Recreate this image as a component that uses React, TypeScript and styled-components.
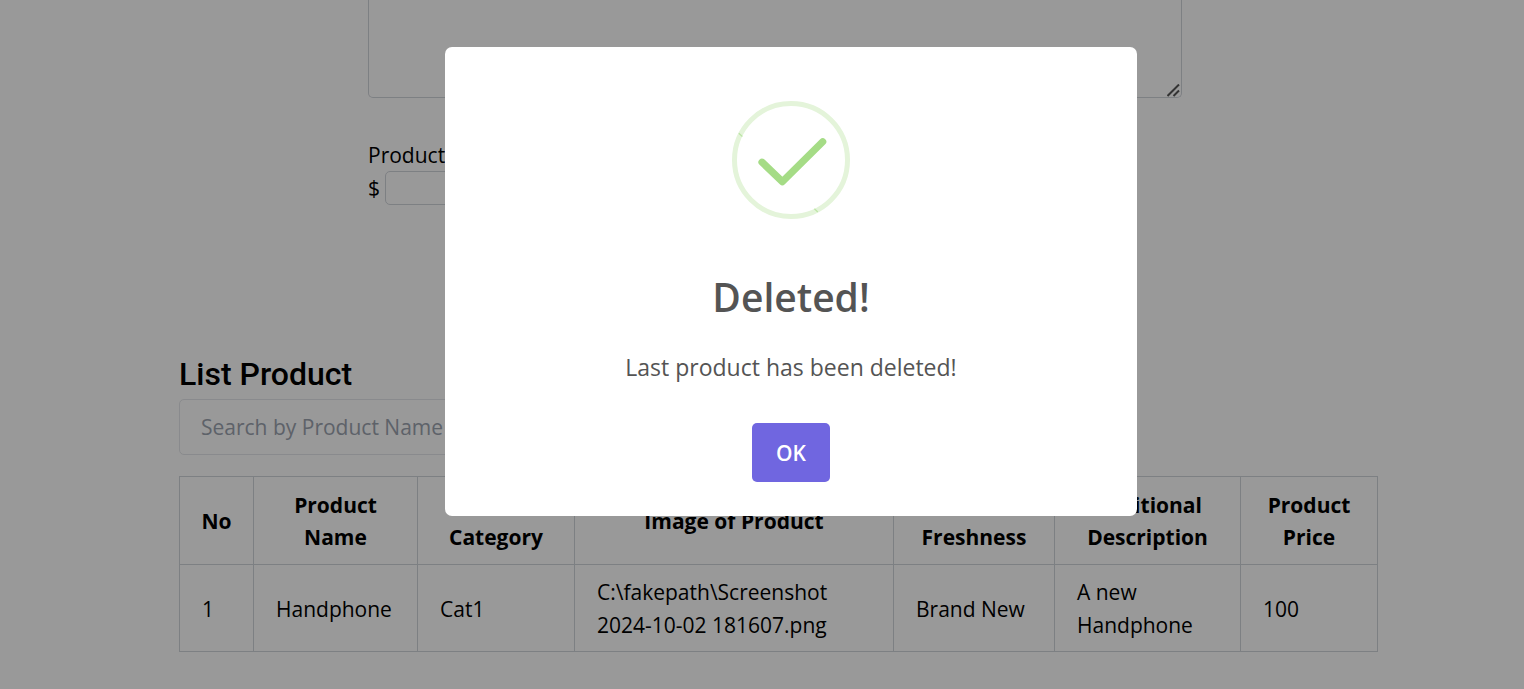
import React from "react";
import styled, { createGlobalStyle } from "styled-components";

const GlobalStyle = createGlobalStyle`
  *, *::before, *::after { box-sizing: border-box; }
  html, body { margin: 0; height: 100%; overflow: hidden; background: #fff; }
  body {
    font-family: "Open Sans", "Noto Sans", sans-serif;
    font-size: 21px;
    line-height: 33px;
    color: #000;
  }
  button, input, textarea { font: inherit; }
`;

const Page = styled.main`
  padding: 0 146px 32px 179px;
`;

const ProductForm = styled.form`
  display: flex;
  flex-direction: column;
  margin: 0 196px 0 189px;
`;

const DescriptionField = styled.div`
  position: relative;
  display: flex;
  margin-bottom: 41px;
`;

const Description = styled.textarea`
  flex: 1;
  height: 98px;
  padding: 8px;
  border: 1px solid #d1d5db;
  border-top: 0;
  border-radius: 0 0 5px 5px;
  resize: none;
  outline: none;
`;

const Grip = styled.svg`
  position: absolute;
  right: 2px;
  bottom: 1px;
`;

const PriceLabel = styled.label`
  line-height: 32px;
`;

const PriceRow = styled.div`
  display: flex;
  align-items: center;
  gap: 5px;
  height: 34px;
`;

const PriceInput = styled.input`
  width: 280px;
  height: 34px;
  padding: 0 8px;
  border: 1px solid #d1d5db;
  border-radius: 5px;
`;

const ListSection = styled.section`
  display: flex;
  flex-direction: column;
  margin-top: 148px;
`;

const ListTitle = styled.h2`
  margin: 0 0 4px;
  font-family: Roboto, sans-serif;
  font-size: 32px;
  font-weight: 500;
  line-height: 42px;
`;

const SearchInput = styled.input`
  width: 50%;
  height: 56px;
  padding: 0 21px;
  border: 1px solid #e5e7eb;
  border-radius: 5px;
  margin-bottom: 21px;
  &::placeholder { color: #9ca3af; opacity: 1; }
`;

const Table = styled.table`
  width: 100%;
  table-layout: fixed;
  border-collapse: collapse;
`;

const Col = styled.col<{ $width: number }>`
  width: ${(p) => p.$width}px;
`;

const HeadCell = styled.th`
  padding: 12px 16px 11px;
  border: 1px solid #d1d5db;
  font-weight: 700;
  line-height: 32px;
`;

const Cell = styled.td`
  padding: 11px 22px 9px;
  border: 1px solid #d1d5db;
`;

const Overlay = styled.div`
  position: fixed;
  inset: 0;
  display: flex;
  justify-content: center;
  align-items: flex-start;
  padding: 47px 0 0 58px;
  background: rgba(0, 0, 0, 0.4);
`;

const Dialog = styled.div`
  display: flex;
  flex-direction: column;
  align-items: center;
  width: 692px;
  padding: 54px 24px 34px;
  border-radius: 7px;
  background: #fff;
`;

const DialogTitle = styled.h2`
  margin: 54px 0 27px;
  color: #545454;
  font-size: 39px;
  font-weight: 600;
  line-height: 48px;
`;

const DialogText = styled.p`
  margin: 0 0 37px;
  color: #545454;
  font-size: 23px;
  line-height: 38px;
`;

const ConfirmButton = styled.button`
  width: 78px;
  height: 59px;
  padding: 2px 0 0;
  border: 0;
  border-radius: 5px;
  background: #7066e0;
  color: #fff;
  font-weight: 600;
`;

const columns = [
  { label: "No", width: 74 },
  { label: "Product Name", width: 164 },
  { label: "Product Category", width: 157 },
  { label: "Image of Product", width: 319 },
  { label: "Product Freshness", width: 161 },
  { label: "Additional Description", width: 186 },
  { label: "Product Price", width: 137 },
];

const products = [
  ["1", "Handphone", "Cat1", "C:\\fakepath\\Screenshot 2024-10-02 181607.png", "Brand New", "A new Handphone", "100"],
];

const SuccessIcon = () => (
  <svg width="118" height="118" viewBox="0 0 118 118" fill="none" aria-hidden="true">
    <circle cx="59" cy="59" r="56.5" stroke="#e4f4da" strokeWidth="5" />
    <path d="M6.8 32.3l3.6 3.2M82.4 107.8l3.4 3.2" stroke="#bce5a5" strokeWidth="1.2" />
    <path
      d="M30 61.2L50.3 80.7L90.7 40.8"
      stroke="#a5dc86"
      strokeWidth="7.2"
      strokeLinecap="round"
      strokeLinejoin="round"
    />
  </svg>
);

export default function App() {
  return (
    <>
      <GlobalStyle />
      <Page>
        <ProductForm>
          <DescriptionField>
            <Description aria-label="Additional Description" />
            <Grip width="13" height="13" viewBox="0 0 13 13" aria-hidden="true">
              <path d="M.5 12L12 .5M6.5 12L12 6.5" stroke="#555" strokeWidth="2" />
            </Grip>
          </DescriptionField>
          <PriceLabel htmlFor="price">Product Price</PriceLabel>
          <PriceRow>
            <span>$</span>
            <PriceInput id="price" type="text" />
          </PriceRow>
        </ProductForm>
        <ListSection>
          <ListTitle>List Product</ListTitle>
          <SearchInput type="search" aria-label="Search by Product Name" placeholder="Search by Product Name" />
          <Table>
            <colgroup>
              {columns.map((c) => (
                <Col key={c.label} $width={c.width} />
              ))}
            </colgroup>
            <thead>
              <tr>
                {columns.map((c) => (
                  <HeadCell key={c.label} scope="col">{c.label}</HeadCell>
                ))}
              </tr>
            </thead>
            <tbody>
              {products.map((row) => (
                <tr key={row[0]}>
                  {row.map((value, i) => (
                    <Cell key={i}>{value}</Cell>
                  ))}
                </tr>
              ))}
            </tbody>
          </Table>
        </ListSection>
      </Page>
      <Overlay>
        <Dialog role="dialog" aria-modal="true" aria-labelledby="dialog-title">
          <SuccessIcon />
          <DialogTitle id="dialog-title">Deleted!</DialogTitle>
          <DialogText>Last product has been deleted!</DialogText>
          <ConfirmButton type="button">OK</ConfirmButton>
        </Dialog>
      </Overlay>
    </>
  );
}
